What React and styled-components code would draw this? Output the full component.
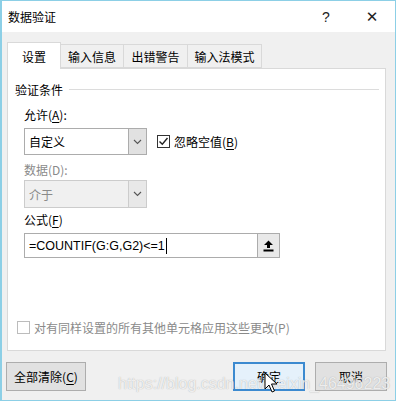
import React from 'react'
import styled, { createGlobalStyle } from "styled-components";

const GlobalStyle = createGlobalStyle`
body{
    margin:0;
    background:#fff;
    font-family:"Noto Sans CJK SC","Noto Sans",sans-serif;
}
`;

const tabs = ["设置", "输入信息", "出错警告", "输入法模式"];
const tabWidths = [54, 64, 65, 75];

function Chevron(){
    return (
        <svg width="9" height="6" viewBox="0 0 9 6">
            <polyline points="1,1 4.5,4.5 8,1" fill="none" stroke="#555" strokeWidth="1.1" />
        </svg>
    )
}

function Collapse(){
    return (
        <svg width="11" height="12" viewBox="0 0 11 12">
            <path d="M5.5 0.5 L10 5 H7 V8 H4 V5 H1 Z" fill="#000" />
            <rect x="0.5" y="9.5" width="10" height="2" fill="#000" />
        </svg>
    )
}

function Check({checked,disabled}){
    return (
        <CheckBox $disabled={disabled}>
            {checked && (
                <svg width="11" height="11" viewBox="0 0 11 11">
                    <polyline points="1.5,5.5 4.3,8.3 9.5,2" fill="none" stroke="#222" strokeWidth="1.4" />
                </svg>
            )}
        </CheckBox>
    )
}

export default function App() {
  return (
    <>
    <GlobalStyle />
    <Window>
        <TitleBar>
            <Title>数据验证</Title>
            <TitleButton>?</TitleButton>
            <TitleButton $close>✕</TitleButton>
        </TitleBar>

        <Body>
            <TabRow>
                {tabs.map((t,i)=>(
                    <Tab key={t} $active={i===0} $w={tabWidths[i]}>{t}</Tab>
                ))}
            </TabRow>

            <Panel>
                <GroupHeader>
                    <span>验证条件</span>
                    <Rule />
                </GroupHeader>

                <Fields>
                    <Label $mt={10}>允许(<u>A</u>):</Label>
                    <Row $mt={5}>
                        <Select>
                            <SelectText>自定义</SelectText>
                            <ArrowBtn><Chevron /></ArrowBtn>
                        </Select>
                        <CheckLabel>
                            <Check checked />
                            <span>忽略空值(<u>B</u>)</span>
                        </CheckLabel>
                    </Row>

                    <Label $mt={7} $disabled>数据(D):</Label>
                    <Row $mt={2}>
                        <Select $disabled>
                            <SelectText $disabled>介于</SelectText>
                            <ArrowBtn $disabled><Chevron /></ArrowBtn>
                        </Select>
                    </Row>

                    <Label $mt={4}>公式(<u>F</u>)</Label>
                    <Row $mt={5}>
                        <Formula>
                            <FormulaText>=COUNTIF(G:G,G2)&lt;=1<Caret /></FormulaText>
                            <CollapseBtn><Collapse /></CollapseBtn>
                        </Formula>
                    </Row>
                </Fields>

                <ApplyAll>
                    <Check disabled />
                    <span>对有同样设置的所有其他单元格应用这些更改(P)</span>
                </ApplyAll>
            </Panel>

            <ButtonRow>
                <Button $w={80}>全部清除(<u>C</u>)</Button>
                <Spacer />
                <Button $w={72} $primary>确定</Button>
                <Button $w={72}>取消</Button>
            </ButtonRow>
        </Body>

        <Watermark>https://blog.csdn.net/weixin_46496223</Watermark>
        <Cursor>
            <svg width="14" height="22" viewBox="0 0 14 22">
                <path d="M1 1 V17 L5 13 L8 20 L10.5 19 L7.5 12 H13 Z" fill="#fff" stroke="#000" strokeWidth="1" />
            </svg>
        </Cursor>
    </Window>
    </>
  )
}

const Window = styled.div`
position:relative;
width:396px;
height:401px;
box-sizing:border-box;
border:1px solid #8ccfe6;
border-left-width:2px;
background:#f0f0f0;
display:flex;
flex-direction:column;
overflow:hidden;
`;

const TitleBar = styled.div`
height:31px;
background:#fff;
display:flex;
align-items:center;
font-size:12px;
color:#000;
`;

const Title = styled.div`
flex:1;
padding-left:6px;
`;

const TitleButton = styled.div`
width:46px;
height:100%;
display:flex;
align-items:center;
justify-content:center;
font-family:${p=>p.$close ? '"DejaVu Sans",sans-serif' : '"Liberation Sans",sans-serif'};
font-size:${p=>p.$close ? "15px" : "14px"};
color:#222;
`;

const Body = styled.div`
flex:1;
display:flex;
flex-direction:column;
padding:10px 8px 0 5px;
`;

const TabRow = styled.div`
display:flex;
align-items:flex-end;
height:26px;
position:relative;
z-index:1;
`;

const Tab = styled.div`
width:${p=>p.$w}px;
height:${p=>p.$active ? "27px" : "24px"};
box-sizing:border-box;
border:1px solid #d9d9d9;
border-bottom:${p=>p.$active ? "none" : "1px solid #d9d9d9"};
margin-left:${p=>p.$active ? "0" : "-1px"};
margin-bottom:${p=>p.$active ? "-1px" : "0"};
background:${p=>p.$active ? "#fff" : "#f0f0f0"};
display:flex;
align-items:center;
justify-content:center;
font-size:12px;
color:#000;
padding-top:${p=>p.$active ? "0" : "1px"};
`;

const Panel = styled.div`
width:379px;
height:283px;
box-sizing:border-box;
background:#fff;
border:1px solid #d9d9d9;
display:flex;
flex-direction:column;
padding:12px 6px 14px 7px;
`;

const GroupHeader = styled.div`
display:flex;
align-items:center;
gap:6px;
height:16px;
font-size:12px;
color:#000;
`;

const Rule = styled.div`
flex:1;
height:1px;
background:#dcdcdc;
`;

const Fields = styled.div`
display:flex;
flex-direction:column;
padding-left:9px;
`;

const Label = styled.div`
margin-top:${p=>p.$mt}px;
height:16px;
line-height:16px;
font-size:12px;
color:${p=>p.$disabled ? "#8a8a8a" : "#000"};
u{text-underline-offset:2px;}
`;

const Row = styled.div`
margin-top:${p=>p.$mt}px;
display:flex;
align-items:center;
`;

const Select = styled.div`
width:123px;
height:${p=>p.$disabled ? "28px" : "27px"};
box-sizing:border-box;
border:1px solid #acacac;
border-color:${p=>p.$disabled ? "#cccccc" : "#acacac"};
background:${p=>p.$disabled ? "#f0f0f0" : "#fff"};
display:flex;
`;

const SelectText = styled.div`
flex:1;
display:flex;
align-items:center;
padding-left:4px;
font-size:12px;
color:${p=>p.$disabled ? "#8a8a8a" : "#000"};
`;

const ArrowBtn = styled.div`
width:17px;
border-left:1px solid ${p=>p.$disabled ? "#cccccc" : "#acacac"};
background:${p=>p.$disabled ? "#e8e8e8" : "#e1e1e1"};
display:flex;
align-items:center;
justify-content:center;
`;

const CheckLabel = styled.div`
display:flex;
align-items:center;
gap:4px;
margin-left:10px;
font-size:12px;
color:#000;
u{text-underline-offset:2px;}
`;

const CheckBox = styled.div`
width:13px;
height:13px;
box-sizing:border-box;
border:1px solid ${p=>p.$disabled ? "#bcbcbc" : "#333"};
background:#fff;
display:flex;
align-items:center;
justify-content:center;
`;

const Formula = styled.div`
width:256px;
height:25px;
box-sizing:border-box;
border:1px solid #acacac;
display:flex;
`;

const FormulaText = styled.div`
flex:1;
display:flex;
align-items:center;
padding-left:4px;
font-family:"Liberation Sans",sans-serif;
font-size:12.5px;
color:#000;
`;

const Caret = styled.span`
display:inline-block;
width:1px;
height:16px;
background:#000;
margin-left:1px;
`;

const CollapseBtn = styled.div`
width:21px;
border-left:1px solid #acacac;
background:#e9e9e9;
display:flex;
align-items:center;
justify-content:center;
`;

const ApplyAll = styled.div`
margin-top:auto;
display:flex;
align-items:center;
gap:4px;
padding-left:2px;
font-size:12px;
color:#8a8a8a;
`;

const ButtonRow = styled.div`
margin-top:11px;
display:flex;
gap:10px;
margin-left:-1px;
`;

const Spacer = styled.div`
flex:1;
`;

const Button = styled.div`
width:${p=>p.$w}px;
height:29px;
box-sizing:border-box;
border:1px solid ${p=>p.$primary ? "#3c8ad0" : "#adadad"};
box-shadow:${p=>p.$primary ? "inset 0 0 0 1px #3c8ad0" : "none"};
background:${p=>p.$primary ? "#e5f1fb" : "#e1e1e1"};
display:flex;
align-items:center;
justify-content:center;
font-size:12px;
color:#000;
u{text-underline-offset:2px;}
`;

const Watermark = styled.div`
position:absolute;
left:116px;
top:374px;
font-family:"Liberation Sans",sans-serif;
font-size:16px;
color:rgba(250,250,250,0.85);
text-shadow:0 0 1px rgba(120,120,120,0.6);
pointer-events:none;
white-space:nowrap;
`;

const Cursor = styled.div`
position:absolute;
left:262px;
top:371px;
line-height:0;
`;
